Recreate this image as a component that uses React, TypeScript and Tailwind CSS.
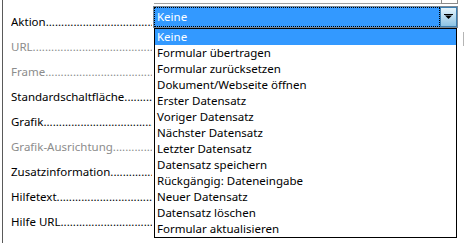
const fields = [
  { label: "Aktion", enabled: true },
  { label: "URL", enabled: false },
  { label: "Frame", enabled: false },
  { label: "Standardschaltfläche", enabled: true },
  { label: "Grafik", enabled: true },
  { label: "Grafik-Ausrichtung", enabled: false },
  { label: "Zusatzinformation", enabled: true },
  { label: "Hilfetext", enabled: true },
  { label: "Hilfe URL", enabled: true },
];

const actions = [
  "Keine",
  "Formular übertragen",
  "Formular zurücksetzen",
  "Dokument/Webseite öffnen",
  "Erster Datensatz",
  "Voriger Datensatz",
  "Nächster Datensatz",
  "Letzter Datensatz",
  "Datensatz speichern",
  "Rückgängig: Dateneingabe",
  "Neuer Datensatz",
  "Datensatz löschen",
  "Formular aktualisieren",
];

const DOTS = ".".repeat(80);

function ArrowDown() {
  return (
    <svg width="9" height="6" viewBox="0 0 9 6">
      <rect x="0" y="0" width="9" height="1" fill="#000" />
      <path d="M1 1.5 H8 L4.5 5 Z" fill="#000" />
    </svg>
  );
}

export default function App() {
  return (
    <div className="relative h-[243px] w-[464px] overflow-hidden bg-white font-['Segoe_UI','Noto_Sans',sans-serif] text-[11.5px] leading-none text-black">
      <div className="ml-[2px] flex h-full border-l border-[#5a5a5a]">
        <div className="w-[149px] shrink-0 pt-[9px] pl-[8px]">
          {fields.map((f) => (
            <div
              key={f.label}
              className={`flex h-[25px] items-center overflow-hidden whitespace-nowrap ${
                f.enabled ? "text-black" : "text-[#8c8c8c]"
              }`}
            >
              <span>{f.label}</span>
              <span className="overflow-hidden">{DOTS}</span>
            </div>
          ))}
        </div>

        <div className="relative flex-1">
          {/* end of the field above */}
          <div className="flex h-[4px] pr-[6px]">
            <div className="ml-[2px] flex-1 border-b border-[#a0a0a0]" />
            <div className="w-[17px] border-x border-b border-[#8a8a8a]" />
          </div>

          {/* Aktion combo box */}
          <div className="mt-[2px] mr-[6px] ml-[1px] flex h-[22px] border border-[#7b8a99] bg-white">
            <div className="flex flex-1 items-center border border-dotted border-black bg-[#3399ff] pl-[2px] text-white">
              Keine
            </div>
            <div className="flex w-[17px] items-center justify-center border border-[#3c7fb1] bg-gradient-to-b from-[#e5f4fc] to-[#8cc3e4]">
              <ArrowDown />
            </div>
          </div>

          {/* open list */}
          <div className="absolute top-[28px] left-[2px] w-[303px] border border-black bg-white">
            {actions.map((a, i) => (
              <div
                key={a}
                className={`flex h-[16px] items-center pl-[2px] whitespace-nowrap ${
                  i === 0 ? "bg-[#3399ff] text-white" : "text-black"
                }`}
              >
                {a}
              </div>
            ))}
          </div>
        </div>
      </div>

      <div className="absolute top-[32px] right-0 h-[14px] w-px bg-[#b5b5b5]" />
    </div>
  );
}
